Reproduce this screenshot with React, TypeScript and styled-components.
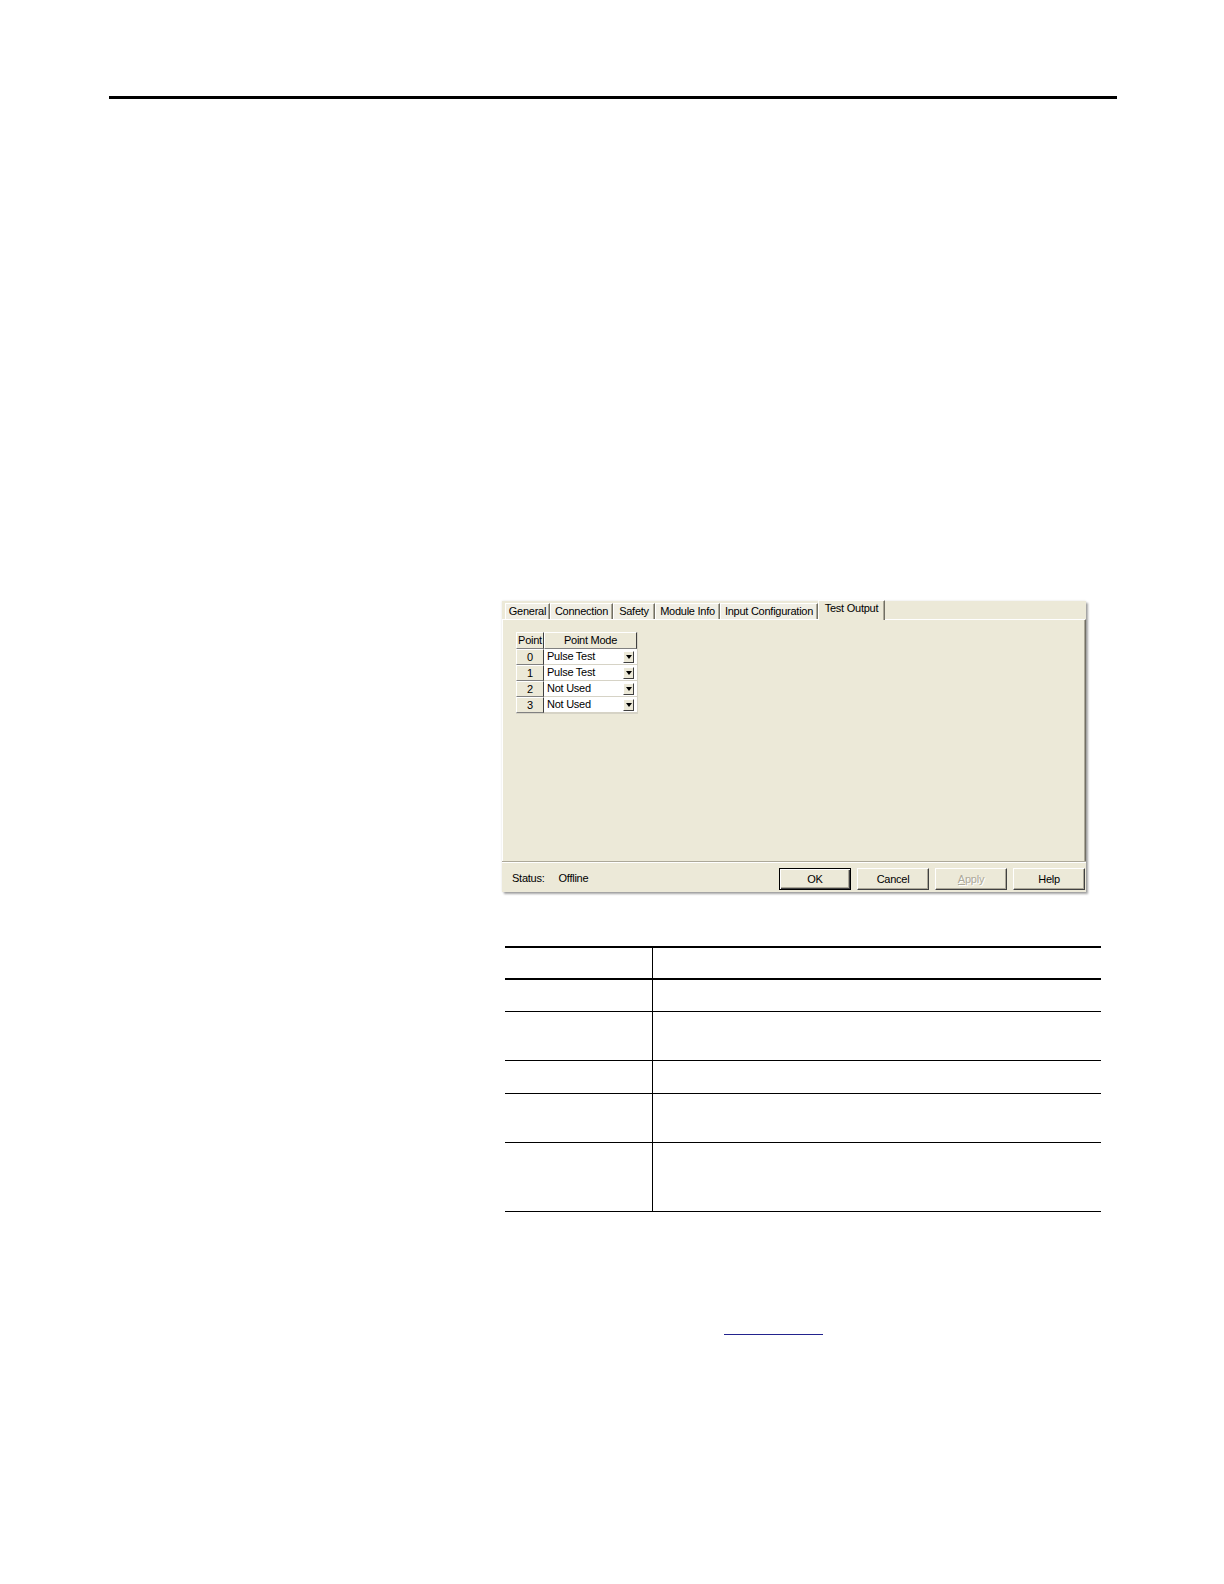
import React from "react";
import styled, { createGlobalStyle, css } from "styled-components";

const Global = createGlobalStyle`
  html, body { margin: 0; padding: 0; background: #ffffff; }
  body { font-family: "Liberation Sans", Arial, sans-serif; }
`;

const Page = styled.div`
  width: 1224px;
  height: 1584px;
  box-sizing: border-box;
  padding-top: 96px;
  background: #ffffff;
  overflow: hidden;
`;

const TopRule = styled.div`
  margin-left: 109px;
  width: 1008px;
  height: 3px;
  background: #000000;
`;

const Content = styled.div`
  padding-left: 502px;
`;

const Dialog = styled.div`
  margin-top: 502px;
  width: 584px;
  background: #ece9d8;
  box-shadow: 2px 2px 2px rgba(0, 0, 0, 0.35), 0 0 2px rgba(0, 0, 0, 0.12);
  font-family: "Liberation Sans", Arial, sans-serif;
  font-size: 11px;
  letter-spacing: -0.25px;
  color: #000000;
  display: flex;
  flex-direction: column;
`;

const TabStrip = styled.div`
  height: 18px;
  display: flex;
  align-items: flex-end;
  padding-left: 3px;
  position: relative;
  z-index: 1;
`;

const Tab = styled.div<{ $w: number; $active?: boolean }>`
  box-sizing: border-box;
  width: ${(p) => p.$w}px;
  height: 16px;
  border-top: 1px solid #ffffff;
  border-left: 1px solid #ffffff;
  border-right: 1px solid #716f64;
  box-shadow: inset -1px 0 #aca899;
  background: #f0eee4;
  display: flex;
  align-items: center;
  justify-content: center;
  white-space: nowrap;
  line-height: 13px;
  ${(p) =>
    p.$active &&
    css`
      height: 20px;
      margin-bottom: -1px;
      background: #ece9d8;
      align-items: flex-start;
      padding-top: 1px;
    `}
`;

const Panel = styled.div`
  box-sizing: border-box;
  height: 242px;
  border-top: 1px solid #ffffff;
  border-left: 1px solid #ffffff;
  border-right: 1px solid #716f64;
  box-shadow: inset -1px 0 #aca899;
  padding: 12px 0 0 13px;
`;

const PointGrid = styled.div`
  display: grid;
  grid-template-columns: 28px 93px;
  grid-template-rows: 17px;
  grid-auto-rows: 16px;
  width: max-content;
  border-right: 1px solid #d6d3c6;
  border-bottom: 1px solid #d6d3c6;
`;

const HeadCell = styled.div`
  box-sizing: border-box;
  background: #ece9d8;
  border-top: 1px solid #ffffff;
  border-left: 1px solid #ffffff;
  border-right: 1px solid #404040;
  border-bottom: 1px solid #808080;
  display: flex;
  align-items: center;
  justify-content: center;
  line-height: 13px;
`;

const ModeCell = styled.div`
  box-sizing: border-box;
  background: #ffffff;
  border-bottom: 1px solid #d6d3c6;
  display: flex;
  align-items: center;
  justify-content: space-between;
  padding: 0 3px 0 3px;
  line-height: 13px;
`;

const DropButton = styled.div`
  box-sizing: border-box;
  width: 11px;
  height: 12px;
  background: #ece9d8;
  border-top: 1px solid #ffffff;
  border-left: 1px solid #ffffff;
  border-right: 1px solid #404040;
  border-bottom: 1px solid #404040;
  display: flex;
  align-items: center;
  justify-content: center;
  &::after {
    content: "";
    width: 0;
    height: 0;
    margin-top: 1px;
    border-left: 3px solid transparent;
    border-right: 3px solid transparent;
    border-top: 4px solid #000000;
  }
`;

const StatusBar = styled.div`
  box-sizing: border-box;
  height: 31px;
  border-top: 1px solid #aca899;
  box-shadow: inset 0 1px #ffffff;
  display: flex;
  align-items: flex-start;
  padding: 6px 1px 0 10px;
`;

const StatusInfo = styled.div`
  height: 20px;
  display: flex;
  align-items: center;
  gap: 14px;
`;

const ButtonRow = styled.div`
  margin-left: auto;
  display: flex;
  gap: 6px;
`;

const DlgButton = styled.div<{ $default?: boolean; $disabled?: boolean }>`
  box-sizing: border-box;
  width: 72px;
  height: 22px;
  background: #ece9d8;
  border-top: 1px solid #ffffff;
  border-left: 1px solid #ffffff;
  border-right: 1px solid #404040;
  border-bottom: 1px solid #404040;
  box-shadow: inset -1px -1px #aca899;
  display: flex;
  align-items: center;
  justify-content: center;
  line-height: 13px;
  ${(p) =>
    p.$default &&
    css`
      border: 1px solid #000000;
      box-shadow: inset 1px 1px #ffffff, inset -1px -1px #404040, inset -2px -2px #aca899;
    `}
  ${(p) =>
    p.$disabled &&
    css`
      color: #aca899;
      text-shadow: 1px 1px #ffffff;
    `}
`;

const AccessKey = styled.span`
  text-decoration: underline;
`;

const DocTable = styled.div`
  margin: 54px 0 0 3px;
  width: 596px;
  border-top: 2px solid #000000;
  border-bottom: 1px solid #000000;
`;

const DocRow = styled.div<{ $h: number; $thick?: boolean; $last?: boolean }>`
  display: grid;
  grid-template-columns: 148px 1fr;
  height: ${(p) => p.$h}px;
  border-bottom: ${(p) => (p.$last ? "none" : `${p.$thick ? 2 : 1}px solid #000000`)};
`;

const DocCell = styled.div<{ $first?: boolean }>`
  box-sizing: border-box;
  ${(p) => p.$first && "border-right: 1px solid #000000;"}
`;

const LinkLine = styled.div`
  margin: 122px 0 0 222px;
  width: 99px;
  height: 0;
  border-bottom: 1px solid #23238e;
`;

const tabs: { label: string; w: number; active?: boolean }[] = [
  { label: "General", w: 45 },
  { label: "Connection", w: 63 },
  { label: "Safety", w: 42 },
  { label: "Module Info", w: 65 },
  { label: "Input Configuration", w: 98 },
  { label: "Test Output", w: 67, active: true },
];

const points = [
  { n: "0", mode: "Pulse Test" },
  { n: "1", mode: "Pulse Test" },
  { n: "2", mode: "Not Used" },
  { n: "3", mode: "Not Used" },
];

const rows = [
  { h: 30, thick: true },
  { h: 31 },
  { h: 48 },
  { h: 32 },
  { h: 48 },
  { h: 68, last: true },
];

export default function App() {
  return (
    <>
      <Global />
      <Page>
        <TopRule />
        <Content>
          <Dialog>
            <TabStrip>
              {tabs.map((t) => (
                <Tab key={t.label} $w={t.w} $active={t.active}>
                  {t.label}
                </Tab>
              ))}
            </TabStrip>
            <Panel>
              <PointGrid>
                <HeadCell>Point</HeadCell>
                <HeadCell>Point Mode</HeadCell>
                {points.map((p) => (
                  <React.Fragment key={p.n}>
                    <HeadCell>{p.n}</HeadCell>
                    <ModeCell>
                      <span>{p.mode}</span>
                      <DropButton />
                    </ModeCell>
                  </React.Fragment>
                ))}
              </PointGrid>
            </Panel>
            <StatusBar>
              <StatusInfo>
                <span>Status:</span>
                <span>Offline</span>
              </StatusInfo>
              <ButtonRow>
                <DlgButton $default>OK</DlgButton>
                <DlgButton>Cancel</DlgButton>
                <DlgButton $disabled>
                  <AccessKey>A</AccessKey>pply
                </DlgButton>
                <DlgButton>Help</DlgButton>
              </ButtonRow>
            </StatusBar>
          </Dialog>
          <DocTable>
            {rows.map((r, i) => (
              <DocRow key={i} $h={r.h} $thick={r.thick} $last={r.last}>
                <DocCell $first />
                <DocCell />
              </DocRow>
            ))}
          </DocTable>
          <LinkLine />
        </Content>
      </Page>
    </>
  );
}
